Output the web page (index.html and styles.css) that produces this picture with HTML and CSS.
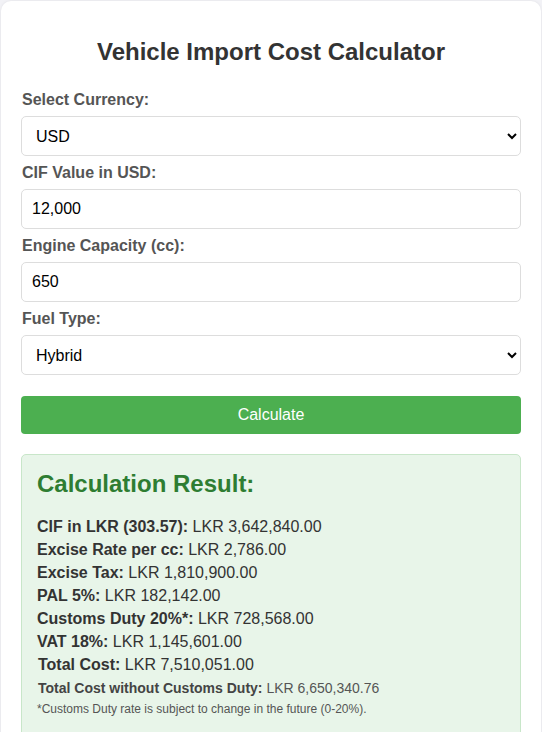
FILE: index.html
```html
<!doctype html>
<html>
<head>
<meta charset="utf-8">
<meta name="viewport" content="width=device-width" />
<title>Vehicle Import Cost Calculator</title>
<link rel="stylesheet" href="styles.css">
</head>
<body>
<div class="container">
    <h1>Vehicle Import Cost Calculator</h1>
    <form class="calc">
        <label for="currency">Select Currency:</label>
        <select id="currency">
            <option>USD</option>
            <option>JPY</option>
            <option>EUR</option>
        </select>
        <label for="cif">CIF Value in USD:</label>
        <input type="text" id="cif" value="12,000">
        <label for="engine">Engine Capacity (cc):</label>
        <input type="text" id="engine" value="650">
        <label for="fuel">Fuel Type:</label>
        <select id="fuel">
            <option>Hybrid</option>
            <option>Petrol</option>
            <option>Electric</option>
        </select>
        <button type="button" class="btn">Calculate</button>
    </form>
    <div class="result">
        <h2>Calculation Result:</h2>
        <p><strong>CIF in LKR (303.57):</strong> LKR 3,642,840.00</p>
        <p><strong>Excise Rate per cc:</strong> LKR 2,786.00</p>
        <p><strong>Excise Tax:</strong> LKR 1,810,900.00</p>
        <p><strong>PAL 5%:</strong> LKR 182,142.00</p>
        <p><strong>Customs Duty 20%*:</strong> LKR 728,568.00</p>
        <p><strong>VAT 18%:</strong> LKR 1,145,601.00</p>
        <p class="total"><strong>Total Cost:</strong> LKR 7,510,051.00</p>
        <p class="sub"><strong>Total Cost without Customs Duty:</strong> LKR 6,650,340.76</p>
        <p class="note">*Customs Duty rate is subject to change in the future (0-20%).</p>
    </div>
</div>
</body>
</html>
```

FILE: styles.css
```css
body {
	margin: 0;
	padding: 1px;
	background: #f2f2f6;
	font-family: "Liberation Sans", Arial, sans-serif;
	color: #333;
}
.container {
	background: #fff;
	border-radius: 10px;
	padding: 20px 20px 40px;
	box-shadow: 0 0 3px rgba(0,0,0,0.08);
}
h1 {
	font-size: 24px;
	text-align: center;
	color: #333;
	margin: 17px 0 25px;
}
.calc label {
	display: block;
	font-weight: bold;
	font-size: 16px;
	line-height: 18px;
	color: #555;
	margin: 0 0 7px 1px;
}
.calc input,
.calc select {
	display: block;
	width: 100%;
	height: 40px;
	box-sizing: border-box;
	padding: 0 10px;
	margin: 0 0 8px;
	font: 16px "Liberation Sans", Arial, sans-serif;
	color: #000;
	background: #fff;
	border: 1px solid #ddd;
	border-radius: 5px;
}
.btn {
	display: block;
	width: 100%;
	height: 38px;
	margin-top: 21px;
	border: none;
	border-radius: 4px;
	background: #4caf50;
	color: #fff;
	font: 16px "Liberation Sans", Arial, sans-serif;
}
.result {
	margin-top: 20px;
	padding: 15px 15px 20px;
	background: #e8f5e9;
	border: 1px solid #c8e6c9;
	border-radius: 5px;
}
.result h2 {
	font-size: 24px;
	color: #2e7d32;
	margin: 0 0 20px;
}
.result p {
	margin: 5px 0;
	font-size: 16px;
	line-height: 18px;
}
.result .total {
	padding-left: 1px;
}
.result .sub {
	font-size: 14px;
	color: #555;
	padding-left: 1px;
}
.result .sub strong {
	color: #444;
}
.result .note {
	font-size: 12px;
	line-height: 14px;
	color: #555;
	margin-top: 3px;
}
```
